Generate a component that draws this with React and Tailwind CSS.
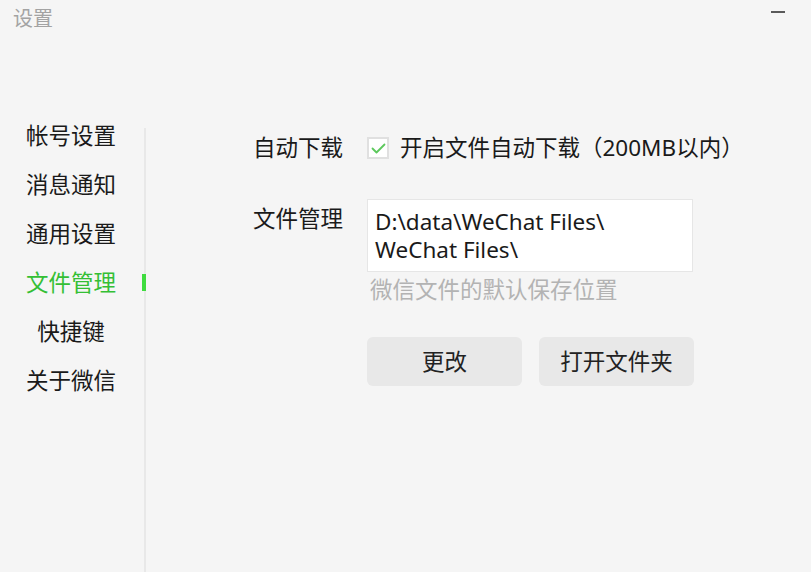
import React, { useState } from 'react';

const FONT = { fontFamily: '"Noto Sans", "Noto Sans CJK SC", sans-serif' };

const NAV = ['帐号设置', '消息通知', '通用设置', '文件管理', '快捷键', '关于微信'];

const CheckIcon = () => (
  <svg width="15" height="11" viewBox="0 0 15 11" fill="none">
    <polyline points="1.5,5.5 5.5,9.5 13.5,1.5" stroke="#5cc85c" strokeWidth="1.8" strokeLinecap="round" strokeLinejoin="round" />
  </svg>
);

export default function App() {
  const [active, setActive] = useState('文件管理');
  const [autoDl, setAutoDl] = useState(true);

  return (
    <div className="w-[811px] h-[572px] bg-[#f5f5f5] flex flex-col overflow-hidden text-[#1a1a1a]" style={FONT}>
      {/* title bar */}
      <div className="h-[111px] flex justify-between items-start shrink-0">
        <span className="ml-[13px] mt-[4px] text-[20px] leading-[30px] text-[#a3a3a3]">设置</span>
        <div className="mr-[26px] mt-[11px] w-[14px] h-[2px] bg-[#5a5a5a]" />
      </div>

      <div className="flex flex-1 min-h-0">
        {/* sidebar */}
        <nav className="w-[142px] flex flex-col shrink-0">
          {NAV.map((n) => (
            <button
              key={n}
              onClick={() => setActive(n)}
              className={`h-[49px] flex items-center justify-center text-[22.5px] ${
                active === n ? 'text-[#34bf34]' : 'text-[#1a1a1a]'
              }`}
            >
              {n}
            </button>
          ))}
        </nav>

        {/* divider */}
        <div className="relative ml-[2px] mt-[17px] w-[2px] bg-[#e8e8e8] shrink-0">
          <div className="absolute left-[-2px] top-[146px] w-[4px] h-[17px] bg-[#3fdc3f]" />
        </div>

        {/* content */}
        <div className="flex-1 pl-[107px] pt-[22px]">
          <div className="flex items-center h-[30px]">
            <span className="w-[114px] text-[22.5px]">自动下载</span>
            <button
              onClick={() => setAutoDl(!autoDl)}
              className="w-[22px] h-[22px] border-2 border-[#e0e0e0] bg-white flex items-center justify-center"
            >
              {autoDl && <CheckIcon />}
            </button>
            <span className="ml-[11px] text-[22.5px]">开启文件自动下载（200MB以内）</span>
          </div>

          <div className="flex items-start mt-[36px]">
            <span className="w-[114px] mt-[5px] text-[22.5px] leading-[30px]">文件管理</span>
            <div>
              <div className="w-[326px] h-[73px] bg-white border border-[#e6e6e6] pl-[7px] pt-[8px] text-[22.5px] leading-[28px]">
                D:\data\WeChat Files\
                <br />
                WeChat Files\
              </div>
              <div className="mt-[3px] pl-[3px] text-[22.5px] leading-[30px] text-[#b3b3b3]">微信文件的默认保存位置</div>
              <div className="flex gap-[17px] mt-[32px]">
                <button className="w-[155px] h-[49px] rounded-[6px] bg-[#e8e8e8] text-[22.5px] text-[#222]">更改</button>
                <button className="w-[155px] h-[49px] rounded-[6px] bg-[#e8e8e8] text-[22.5px] text-[#222]">打开文件夹</button>
              </div>
            </div>
          </div>
        </div>
      </div>
    </div>
  );
}
